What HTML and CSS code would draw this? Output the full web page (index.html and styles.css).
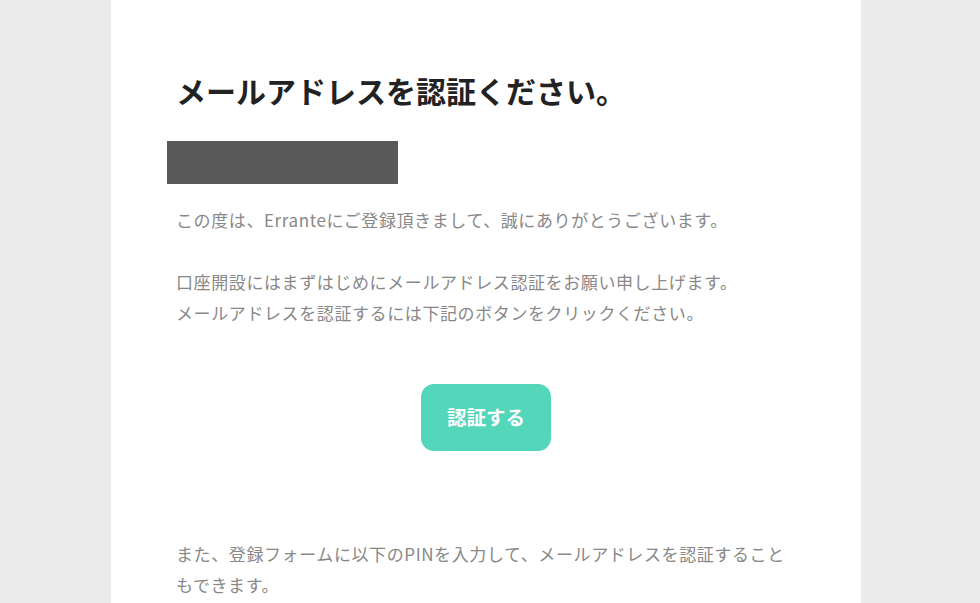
FILE: index.html
```html
<!DOCTYPE html>
<html lang="ja">
    <head>
        <meta charset="utf-8" />
        <title>メールアドレスを認証ください。</title>
        <link rel="stylesheet" href="styles.css">
    </head>
    <body>
        <div class="wrap">
            <div class="mail">
                <h1 class="title">メールアドレスを認証ください。</h1>
                <div class="logo"></div>
                <p class="txt">この度は、Erranteにご登録頂きまして、誠にありがとうございます。</p>
                <p class="txt gap">口座開設にはまずはじめにメールアドレス認証をお願い申し上げます。<br/>メールアドレスを認証するには下記のボタンをクリックください。</p>
                <div class="btn-area">
                    <a class="btn" href="#">認証する</a>
                </div>
                <p class="txt pin">また、登録フォームに以下のPINを入力して、メールアドレスを認証することもできます。</p>
            </div>
        </div>
    </body>
</html>
```

FILE: styles.css
```css
* { margin: 0; padding: 0; }
html, body { height: 100%; }
body { background: #ebebeb; font: 17px/31px "Noto Sans CJK JP", "Noto Sans", sans-serif; color: #888; letter-spacing: 0.6px; }
.wrap { width: 750px; margin: 0 0 0 111px; background: #fff; min-height: 100%; }
.mail { padding: 70px 65px 40px; }
.title { font-size: 30px; line-height: 40px; font-weight: 700; color: #222; letter-spacing: 0; }
.logo { width: 231px; height: 43px; margin: 31px 0 0 -9px; background: #595959; }
.txt { margin-top: 20px; }
.txt.gap { margin-top: 31px; }
.btn-area { margin-top: 56px; text-align: center; }
.btn { display: inline-block; width: 130px; height: 67px; line-height: 65px; border-radius: 13px; background: #54d6bb; color: #fff; font-size: 19.5px; font-weight: 700; letter-spacing: 0; text-decoration: none; }
.txt.pin { margin-top: 87px; }
```
